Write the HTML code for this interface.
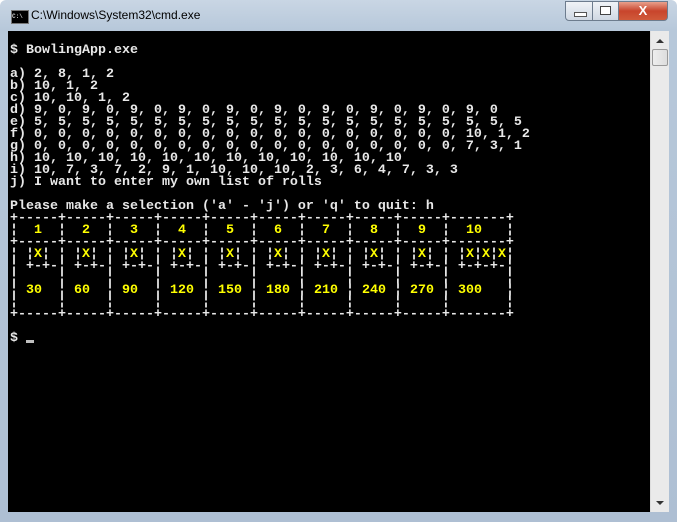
<!DOCTYPE html>
<html><head><style>
body{margin:0;width:677px;height:522px;overflow:hidden;background:#fff;}
.win{position:absolute;left:0;top:0;width:677px;height:522px;background:linear-gradient(#c9d6e4,#b7c8da 30px,#aebfd3);border-radius:6px 6px 0 0;}
.title{position:absolute;left:31px;top:8px;font:12px "Liberation Sans",sans-serif;color:#000;}
.ico{position:absolute;left:11px;top:10px;width:16px;height:12px;background:#000;border:1px solid #777;color:#ccc;font:bold 6px "Liberation Mono",monospace;line-height:12px;}
.btns{position:absolute;left:565px;top:1px;width:104px;height:19px;}
.b{position:absolute;top:0;height:18px;border:1px solid #6d7c8e;background:linear-gradient(#f0f3f7,#cfd8e3);}
.con{position:absolute;left:8px;top:31px;width:642px;height:481px;background:#000;}
.sb{position:absolute;left:650px;top:31px;width:18px;height:481px;background:#eaeaea;border-left:1px solid #ddd;}
pre{position:absolute;left:10px;top:45px;margin:0;font:bold 13.33px "Liberation Mono",monospace;line-height:12px;color:#e8e8e8;}
.y{color:#ffff00;}
</style></head><body>
<div class="win">
<div class="ico">C:\</div>
<div class="title">C:\Windows\System32\cmd.exe</div>
<div class="btns">
<div class="b" style="left:0;width:26px;border-radius:0 0 0 4px"><div style="position:absolute;left:8px;top:10px;width:11px;height:3px;background:#fff;border:1px solid #555"></div></div>
<div class="b" style="left:27px;width:25px"><div style="position:absolute;left:7px;top:4px;width:9px;height:7px;border:1px solid #444;background:#fff"></div></div>
<div class="b" style="left:53px;width:48px;background:linear-gradient(#e8a08c,#c8452c 50%,#d05a3a);border-radius:0 0 4px 0;color:#fff;font:bold 13px 'Liberation Sans',sans-serif;text-align:center;line-height:18px">X</div>
</div>
<div class="con"></div>
<div class="sb">
<div style="position:absolute;left:5px;top:8px;width:0;height:0;border-left:4px solid transparent;border-right:4px solid transparent;border-bottom:4px solid #333"></div>
<div style="position:absolute;left:1px;top:18px;width:14px;height:15px;border:1px solid #999;background:linear-gradient(90deg,#eee,#ddd);border-radius:2px"></div>
<div style="position:absolute;left:5px;top:470px;width:0;height:0;border-left:4px solid transparent;border-right:4px solid transparent;border-top:4px solid #333"></div>
</div>
<pre>$ BowlingApp.exe

a) 2, 8, 1, 2
b) 10, 1, 2
c) 10, 10, 1, 2
d) 9, 0, 9, 0, 9, 0, 9, 0, 9, 0, 9, 0, 9, 0, 9, 0, 9, 0, 9, 0
e) 5, 5, 5, 5, 5, 5, 5, 5, 5, 5, 5, 5, 5, 5, 5, 5, 5, 5, 5, 5, 5
f) 0, 0, 0, 0, 0, 0, 0, 0, 0, 0, 0, 0, 0, 0, 0, 0, 0, 0, 10, 1, 2
g) 0, 0, 0, 0, 0, 0, 0, 0, 0, 0, 0, 0, 0, 0, 0, 0, 0, 0, 7, 3, 1
h) 10, 10, 10, 10, 10, 10, 10, 10, 10, 10, 10, 10
i) 10, 7, 3, 7, 2, 9, 1, 10, 10, 10, 2, 3, 6, 4, 7, 3, 3
j) I want to enter my own list of rolls

Please make a selection ('a' - 'j') or 'q' to quit: h
+-----+-----+-----+-----+-----+-----+-----+-----+-----+-------+
¦  <span class="y">1</span>  ¦  <span class="y">2</span>  ¦  <span class="y">3</span>  ¦  <span class="y">4</span>  ¦  <span class="y">5</span>  ¦  <span class="y">6</span>  ¦  <span class="y">7</span>  ¦  <span class="y">8</span>  ¦  <span class="y">9</span>  ¦  <span class="y">10</span>   ¦
+-----+-----+-----+-----+-----+-----+-----+-----+-----+-------+
¦ ¦<span class="y">X</span>¦ ¦ ¦<span class="y">X</span>¦ ¦ ¦<span class="y">X</span>¦ ¦ ¦<span class="y">X</span>¦ ¦ ¦<span class="y">X</span>¦ ¦ ¦<span class="y">X</span>¦ ¦ ¦<span class="y">X</span>¦ ¦ ¦<span class="y">X</span>¦ ¦ ¦<span class="y">X</span>¦ ¦ ¦<span class="y">X</span>¦<span class="y">X</span>¦<span class="y">X</span>¦
¦ +-+-¦ +-+-¦ +-+-¦ +-+-¦ +-+-¦ +-+-¦ +-+-¦ +-+-¦ +-+-¦ +-+-+-¦
¦     ¦     ¦     ¦     ¦     ¦     ¦     ¦     ¦     ¦       ¦
¦ <span class="y">30</span>  ¦ <span class="y">60</span>  ¦ <span class="y">90</span>  ¦ <span class="y">120</span> ¦ <span class="y">150</span> ¦ <span class="y">180</span> ¦ <span class="y">210</span> ¦ <span class="y">240</span> ¦ <span class="y">270</span> ¦ <span class="y">300</span>   ¦
¦     ¦     ¦     ¦     ¦     ¦     ¦     ¦     ¦     ¦       ¦
+-----+-----+-----+-----+-----+-----+-----+-----+-----+-------+

$ <span style="display:inline-block;width:8px;height:3px;background:#c0c0c0;vertical-align:-2px"></span></pre>
</div>
</body></html>
